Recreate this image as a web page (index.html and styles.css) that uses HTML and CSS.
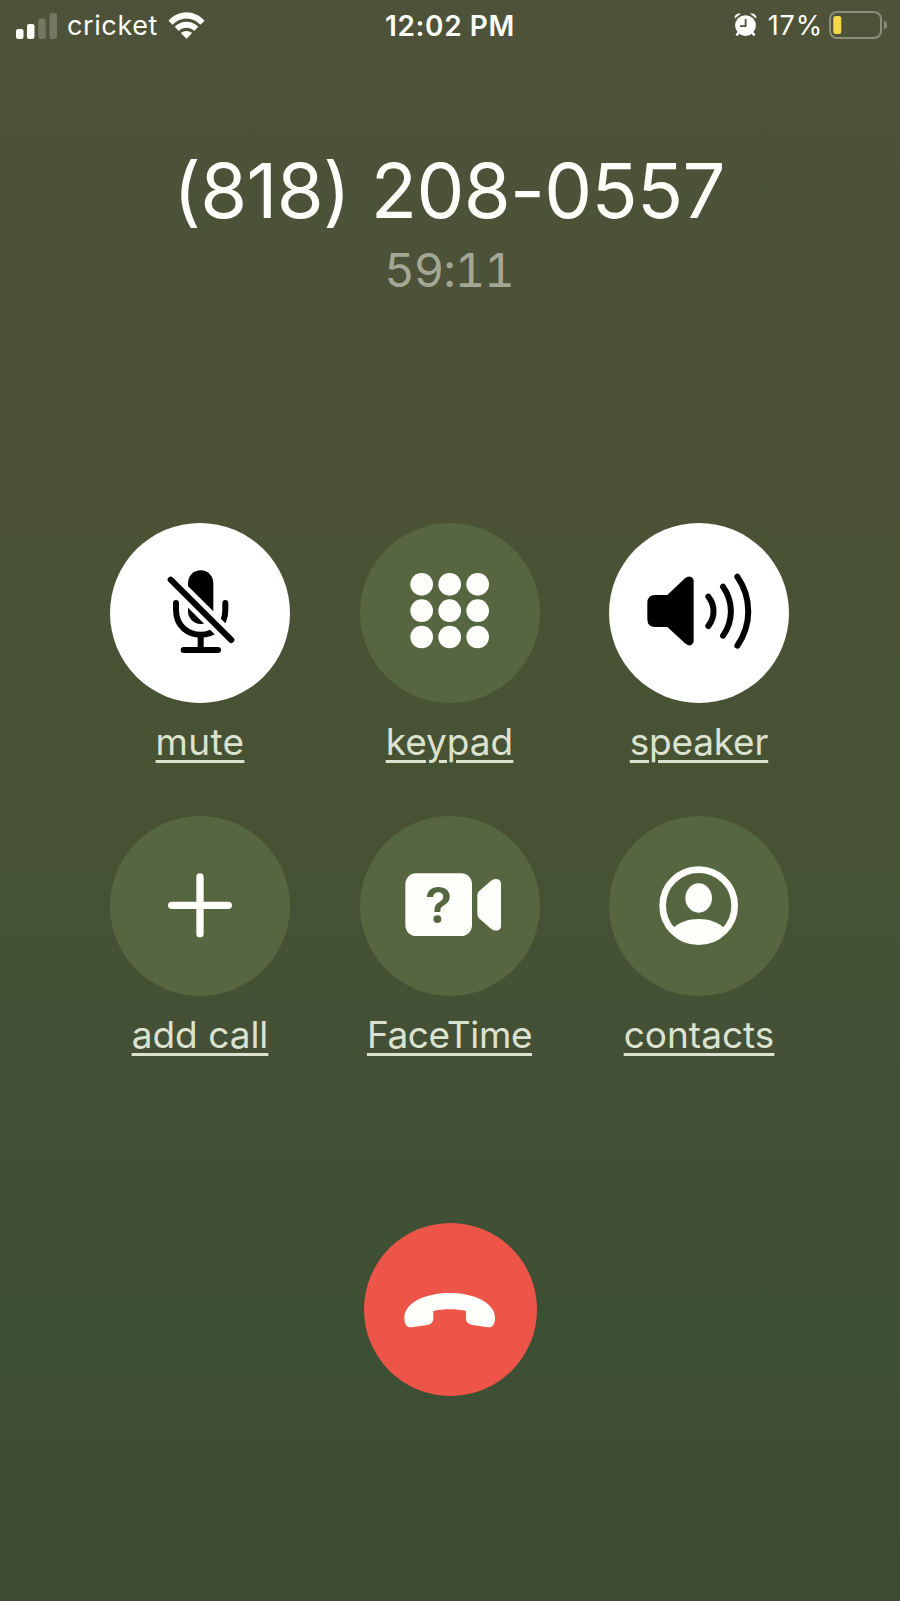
FILE: index.html
```
<!DOCTYPE html>
<html>
<head>
	<meta charset="utf-8">
	<title>Call</title>
	<link rel="stylesheet" href="styles.css">
</head>

<body>
	<div class="status">
		<div class="left">
			<svg class="signal" width="41" height="27" viewBox="0 0 41 27">
				<rect x="0" y="17" width="7.5" height="10" rx="2.2"/>
				<rect x="11" y="12" width="7.5" height="15" rx="2.2"/>
				<rect class="dim" x="22.3" y="6.5" width="7.5" height="20.5" rx="2.2"/>
				<rect class="dim" x="33.5" y="1" width="7.5" height="26" rx="2.2"/>
			</svg>
			<span class="carrier">cricket</span>
			<svg class="wifi" width="37" height="27" viewBox="0 0 37 27">
				<path d="M0.5 8.8 C10.5 -2.6 26.5 -2.6 36.5 8.8 L32.4 12.8 C24.5 4.3 12.5 4.3 4.6 12.8 Z"/>
				<path d="M6.7 14.8 C13.5 8 23.5 8 30.3 14.8 L26.2 18.9 C21.8 14.8 15.2 14.8 10.8 18.9 Z"/>
				<path d="M12.8 21 C16 18.2 21 18.2 24.2 21 L18.5 26.7 Z"/>
			</svg>
		</div>
		<div class="clock">12:02 PM</div>
		<div class="right">
			<svg class="alarm" width="23" height="24" viewBox="0 0 23 24">
				<circle cx="11.5" cy="12.6" r="10.4"/>
				<path d="M0.6 5.6 C0 2 3.6 -0.7 6.9 0.8 Z M22.4 5.6 C23 2 19.4 -0.7 16.1 0.8 Z"/>
				<path class="feet" d="M4.6 19.8 L2.4 22.4 M18.4 19.8 L20.6 22.4"/>
				<path class="hands" d="M11.6 6 V13.2 H6"/>
			</svg>
			<span class="percent">17%</span>
			<svg class="battery" width="58" height="28" viewBox="0 0 58 28">
				<rect class="shell" x="1" y="1" width="51" height="26" rx="7"/>
				<path class="cap" d="M55 9.5 Q58 11 58 14 Q58 17 55 18.5 Z"/>
				<rect class="level" x="4.3" y="5" width="8" height="18" rx="2.5"/>
			</svg>
		</div>
	</div>

	<div class="caller">
		<div class="number">(818) 208-0557</div>
		<div class="timer">59:11</div>
	</div>

	<div class="buttons">
		<div class="item">
			<div class="circle on">
				<svg viewBox="0 0 540 540">
					<rect x="234" y="142" width="76" height="161" rx="38"/>
					<path class="line" d="M198 240 V260 C198 360 346 360 346 260 V240 M272 335 V380 M221 381 H324"/>
					<path class="gap" d="M182 170 L364 351"/>
					<path class="line" d="M182 170 L364 351"/>
				</svg>
			</div>
			<a class="label mute">mute</a>
		</div>
		<div class="item">
			<div class="circle">
				<svg viewBox="0 0 540 540">
					<circle cx="185" cy="184" r="34"/><circle cx="269" cy="184" r="34"/><circle cx="353" cy="184" r="34"/>
					<circle cx="185" cy="263" r="34"/><circle cx="269" cy="263" r="34"/><circle cx="353" cy="263" r="34"/>
					<circle cx="185" cy="342" r="34"/><circle cx="269" cy="342" r="34"/><circle cx="353" cy="342" r="34"/>
				</svg>
			</div>
			<a class="label keypad">keypad</a>
		</div>
		<div class="item">
			<div class="circle on">
				<svg viewBox="0 0 540 540">
					<path d="M138 216 H175 L228 166 Q238 157 248 163 Q254 166 254 174 V354 Q254 362 247 366 Q238 370 228 361 L175 312 H138 Q115 312 115 288 V240 Q115 216 138 216 Z"/>
					<path class="line" d="M298 221 A70 70 0 0 1 298 309 M342 191 A126 126 0 0 1 342 338 M385 161 A180 180 0 0 1 385 368"/>
				</svg>
			</div>
			<a class="label speaker">speaker</a>
		</div>
		<div class="item">
			<div class="circle">
				<svg viewBox="0 0 540 540">
					<path class="line plus" d="M270 183 V353 M185 268 H355"/>
				</svg>
			</div>
			<a class="label add">add call</a>
		</div>
		<div class="item">
			<div class="circle">
				<svg viewBox="0 0 540 540">
					<rect x="136" y="172" width="200" height="188" rx="32"/>
					<path d="M352 238 Q352 231 357 226 L392 195 Q402 187 414 190 Q423 193 423 204 V330 Q423 340 414 343 Q403 346 393 338 L357 307 Q352 302 352 295 Z"/>
					<text class="question" x="236" y="322">?</text>
				</svg>
			</div>
			<a class="label facetime">FaceTime</a>
		</div>
		<div class="item">
			<div class="circle">
				<svg viewBox="0 0 540 540">
					<circle class="ring" cx="269" cy="269" r="108"/>
					<ellipse cx="269" cy="246" rx="40" ry="44"/>
					<path d="M190 338 C228 299 310 299 348 338 C310 398 228 398 190 338 Z"/>
				</svg>
			</div>
			<a class="label contacts">contacts</a>
		</div>
	</div>

	<div class="end">
		<svg viewBox="0 0 519 519">
			<path d="M257 210 C335 210 393 242 393 284 C393 304 386 314 371 313 L326 306 Q306 303 306 286 V264 C280 257 234 257 208 264 V286 Q208 303 190 306 L143 313 C128 314 121 304 121 284 C121 242 179 210 257 210 Z"/>
		</svg>
	</div>
</body>
</html>
```

FILE: styles.css
```
body{
	margin: 0;
	height: 1601px;
	overflow: hidden;
	background: linear-gradient(#4d5238 0%, #4c5237 28%, #465233 52%, #435036 68%, #3e5034 82%, #3b4b34 100%);
	font-family: Inter, "Liberation Sans", sans-serif;
	color: #fefffa;
}

svg{
	display: block;
	fill: currentColor;
}

.status{
	display: grid;
	grid-template-columns: 1fr auto 1fr;
	height: 50px;
	padding: 0 13px 0 16px;
	align-items: center;
	font-size: 27px;
	line-height: 50px;
}
.left, .right{
	display: flex;
	align-items: center;
}
.right{
	justify-content: flex-end;
}
.signal{
	margin-right: 10px;
}
.dim{
	opacity: 0.22;
}
.carrier{
	width: 92px;
	letter-spacing: 0.6px;
	padding-top: 1px;
}
.wifi{
	margin-left: 9px;
}
.alarm, .battery{
	margin-top: -2px;
}
.clock{
	font-weight: 600;
	font-size: 28px;
	letter-spacing: 0.6px;
	margin-right: 3px;
}
.feet, .hands{
	fill: none;
	stroke: currentColor;
	stroke-width: 2.5;
}
.hands{
	stroke: #4d5238;
	stroke-width: 1.8;
}
.percent{
	margin: 0 6px 0 11px;
	letter-spacing: 0.8px;
}
.shell{
	fill: none;
	stroke: #8c8f78;
	stroke-width: 2;
}
.cap{
	fill: #8c8f78;
}
.level{
	fill: #f6d64a;
}

.caller{
	height: 473px;
	padding-top: 90px;
	box-sizing: border-box;
	text-align: center;
}
.number{
	font-size: 76px;
	line-height: 100px;
	letter-spacing: -0.7px;
	margin-right: 2px;
	white-space: nowrap;
}
.timer{
	font-size: 47px;
	line-height: 60px;
	letter-spacing: -1px;
	font-variant-numeric: tabular-nums;
	color: #a4a796;
	margin-right: 2px;
}

.buttons{
	display: grid;
	grid-template-columns: 180px 180px 180px;
	column-gap: 69.5px;
	justify-content: center;
	padding-right: 1px;
}
.item{
	display: flex;
	flex-direction: column;
	align-items: center;
	height: 293px;
}
.circle{
	width: 180px;
	height: 180px;
	border-radius: 50%;
	background: #566640;
}
.on{
	background: #fefffe;
	color: #000;
}
.line{
	fill: none;
	stroke: currentColor;
	stroke-width: 18;
	stroke-linecap: round;
}
.plus{
	stroke-width: 22;
}
.gap{
	stroke: #fefffe;
	stroke-width: 46;
}
.ring{
	fill: none;
	stroke: currentColor;
	stroke-width: 20;
}
.question{
	fill: #566640;
	font-size: 150px;
	font-weight: 600;
	text-anchor: middle;
}
.label{
	margin-top: 17px;
	font-size: 37px;
	line-height: 44px;
	color: #dce2d0;
	white-space: nowrap;
	text-decoration: underline;
	text-decoration-thickness: 2.5px;
	text-underline-offset: 5px;
}
.mute{
	letter-spacing: 0.3px;
}
.speaker{
	letter-spacing: -0.2px;
}
.facetime{
	letter-spacing: -0.4px;
}

.end{
	width: 173px;
	height: 173px;
	margin: 114px auto 0;
	border-radius: 50%;
	background: #ed5548;
}
```
